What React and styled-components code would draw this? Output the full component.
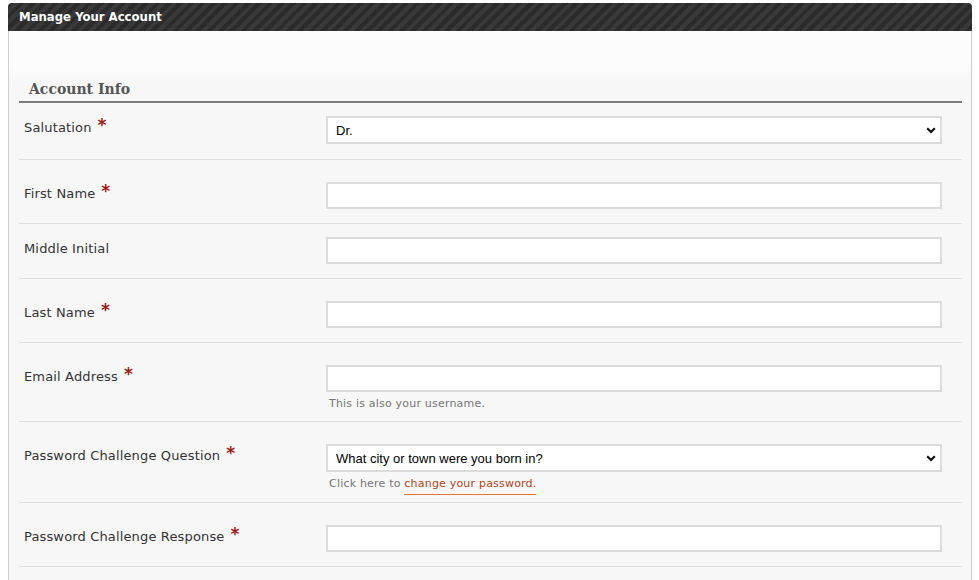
import React from 'react';
import styled, { createGlobalStyle } from 'styled-components';

const GlobalStyle = createGlobalStyle`
  html, body {
    margin: 0;
    padding: 0;
    background: #ffffff;
  }
  body {
    font-family: 'DejaVu Sans', Verdana, sans-serif;
  }
`;

const Panel = styled.section`
  margin: 3px 7px 0 8px;
  width: 964px;
  box-sizing: border-box;
`;

const PanelHeader = styled.header`
  height: 28px;
  box-sizing: border-box;
  padding: 5px 0 0 11px;
  border-radius: 4px 4px 0 0;
  background-color: #313131;
  background-image: repeating-linear-gradient(
    135deg,
    #2b2b2b 0px,
    #2b2b2b 4px,
    #393939 4px,
    #393939 8px
  );
  color: #ffffff;
  font-family: 'DejaVu Sans Condensed', 'DejaVu Sans', Tahoma, sans-serif;
  font-weight: bold;
  font-size: 13px;
  line-height: 18px;
`;

const PanelBody = styled.div`
  border-left: 1px solid #cfcfcf;
  border-right: 1px solid #cfcfcf;
  padding: 0 9px 0 10px;
  background: linear-gradient(#fcfcfc 0px, #fcfcfc 34px, #f7f7f7 52px, #f7f7f7 100%);
  min-height: 560px;
`;

const SectionTitle = styled.h2`
  margin: 0;
  padding: 49px 0 0 10px;
  height: 72px;
  box-sizing: border-box;
  border-bottom: 2px solid #7d7d7d;
  font-family: 'DejaVu Serif', Georgia, serif;
  font-weight: bold;
  font-size: 14px;
  line-height: 18px;
  color: #555555;
`;

const FieldList = styled.div`
  display: flex;
  flex-direction: column;
`;

const Row = styled.div`
  display: grid;
  grid-template-columns: 307px 616px;
  align-items: start;
  padding: ${(p) => (p.$compact ? '13px' : '22px')} 0 ${(p) => p.$bottom || '14px'} 0;
  border-bottom: 1px solid #dedede;
`;

const Label = styled.label`
  padding: 4px 0 0 5px;
  font-size: 13px;
  line-height: 16px;
  color: #333333;
  letter-spacing: 0.15px;
`;

const Required = styled.span`
  margin-left: 6px;
  color: #9c1b1b;
  font-weight: bold;
  font-size: 17px;
  line-height: 10px;
  position: relative;
  top: -1px;
`;

const Field = styled.div`
  display: flex;
  flex-direction: column;
`;

const TextInput = styled.input`
  height: 27px;
  box-sizing: border-box;
  border: 2px solid #dcdcdc;
  background: #ffffff;
  padding: 0 8px;
  font-family: 'Liberation Sans', Arial, sans-serif;
  font-size: 13px;
  outline: none;
`;

const SelectWrap = styled.div`
  position: relative;
  height: 28px;
`;

const Select = styled.select`
  width: 100%;
  height: 28px;
  box-sizing: border-box;
  appearance: none;
  border: 2px solid #dcdcdc;
  background: #ffffff;
  padding: 0 24px 0 8px;
  font-family: 'Liberation Sans', Arial, sans-serif;
  font-size: 13px;
  color: #000000;
  outline: none;
`;

const Chevron = styled.svg`
  position: absolute;
  right: 6px;
  top: 11px;
  pointer-events: none;
`;

const Help = styled.div`
  margin: 4px 0 0 3px;
  font-size: 11px;
  line-height: 16px;
  color: #767676;
  letter-spacing: 0.2px;
`;

const HelpLink = styled.a`
  color: #b0461b;
  text-decoration: none;
  padding-bottom: 4px;
  border-bottom: 1px solid #e0763a;
`;

const SelectField = ({ value, options }) => (
  <SelectWrap>
    <Select defaultValue={value}>
      {options.map((o) => (
        <option key={o}>{o}</option>
      ))}
    </Select>
    <Chevron width='10' height='7' viewBox='0 0 10 7'>
      <path d='M1.2 1.2 L5 5 L8.8 1.2' fill='none' stroke='#111' strokeWidth='2.2' />
    </Chevron>
  </SelectWrap>
);

const App = () => {
  return (
    <>
      <GlobalStyle />
      <Panel>
        <PanelHeader>Manage Your Account</PanelHeader>
        <PanelBody>
          <SectionTitle>Account Info</SectionTitle>
          <FieldList>
            <Row $compact $bottom='15px'>
              <Label>
                Salutation<Required>*</Required>
              </Label>
              <Field>
                <SelectField value='Dr.' options={['Mr.', 'Mrs.', 'Ms.', 'Dr.']} />
              </Field>
            </Row>
            <Row>
              <Label>
                First Name<Required>*</Required>
              </Label>
              <Field>
                <TextInput />
              </Field>
            </Row>
            <Row $compact $bottom='14px'>
              <Label>Middle Initial</Label>
              <Field>
                <TextInput />
              </Field>
            </Row>
            <Row>
              <Label>
                Last Name<Required>*</Required>
              </Label>
              <Field>
                <TextInput />
              </Field>
            </Row>
            <Row $bottom='9px'>
              <Label>
                Email Address<Required>*</Required>
              </Label>
              <Field>
                <TextInput />
                <Help>This is also your username.</Help>
              </Field>
            </Row>
            <Row $bottom='10px'>
              <Label>
                Password Challenge Question<Required>*</Required>
              </Label>
              <Field>
                <SelectField
                  value='What city or town were you born in?'
                  options={[
                    'What city or town were you born in?',
                    "What is your mother's maiden name?",
                    'What was the name of your first pet?',
                  ]}
                />
                <Help>
                  Click here to <HelpLink href='#'>change your password.</HelpLink>
                </Help>
              </Field>
            </Row>
            <Row>
              <Label>
                Password Challenge Response<Required>*</Required>
              </Label>
              <Field>
                <TextInput />
              </Field>
            </Row>
          </FieldList>
        </PanelBody>
      </Panel>
    </>
  );
};

export default App;
